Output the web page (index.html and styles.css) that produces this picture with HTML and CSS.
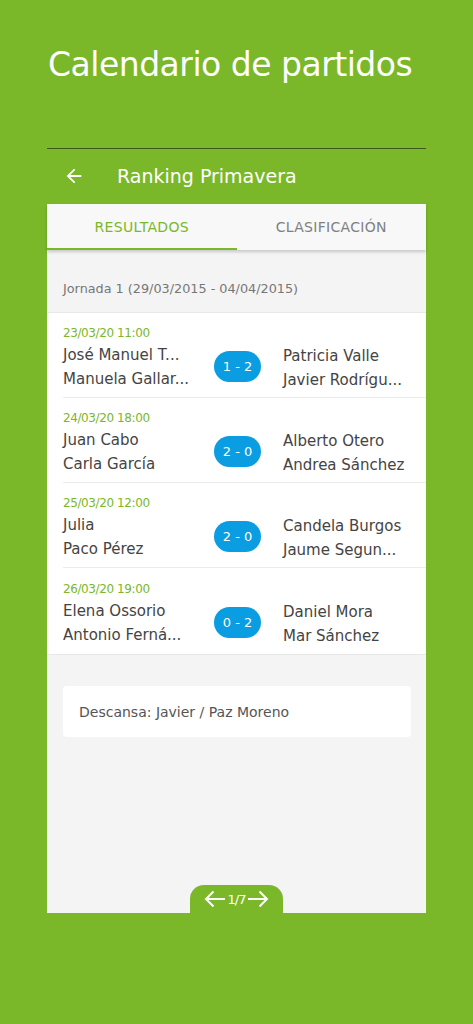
FILE: index.html
```html
<!DOCTYPE html>
<html>
  <head>
    <link rel="stylesheet" href="styles.css">
  </head>
  <body>
    <div class="page">
      <h1 class="page-title">Calendario de partidos</h1>

      <div class="frame">
        <div class="toolbar">
          <svg class="back" width="22" height="22" viewBox="0 0 24 24">
            <path d="M20 11H7.83l5.59-5.59L12 4l-8 8 8 8 1.41-1.41L7.83 13H20v-2z" fill="#fff"/>
          </svg>
          <span class="toolbar-title">Ranking Primavera</span>
        </div>

        <div class="card">
          <div class="tabs">
            <div class="tab active">RESULTADOS</div>
            <div class="tab">CLASIFICACIÓN</div>
          </div>

          <div class="content">
            <div class="round">Jornada 1 (29/03/2015 - 04/04/2015)</div>

            <div class="matches">
              <div class="match">
                <div class="side">
                  <div class="date">23/03/20 11:00</div>
                  <div class="name">José Manuel T...</div>
                  <div class="name">Manuela Gallar...</div>
                </div>
                <div class="score">1 - 2</div>
                <div class="side right">
                  <div class="name">Patricia Valle</div>
                  <div class="name">Javier Rodrígu...</div>
                </div>
              </div>
              <div class="match">
                <div class="side">
                  <div class="date">24/03/20 18:00</div>
                  <div class="name">Juan Cabo</div>
                  <div class="name">Carla García</div>
                </div>
                <div class="score">2 - 0</div>
                <div class="side right">
                  <div class="name">Alberto Otero</div>
                  <div class="name">Andrea Sánchez</div>
                </div>
              </div>
              <div class="match">
                <div class="side">
                  <div class="date">25/03/20 12:00</div>
                  <div class="name">Julia</div>
                  <div class="name">Paco Pérez</div>
                </div>
                <div class="score">2 - 0</div>
                <div class="side right">
                  <div class="name">Candela Burgos</div>
                  <div class="name">Jaume Segun...</div>
                </div>
              </div>
              <div class="match">
                <div class="side">
                  <div class="date">26/03/20 19:00</div>
                  <div class="name">Elena Ossorio</div>
                  <div class="name">Antonio Ferná...</div>
                </div>
                <div class="score">0 - 2</div>
                <div class="side right">
                  <div class="name">Daniel Mora</div>
                  <div class="name">Mar Sánchez</div>
                </div>
              </div>
            </div>

            <div class="rest">Descansa: Javier / Paz Moreno</div>
          </div>

          <div class="pager">
            <svg width="22" height="18" viewBox="0 0 22 18">
              <path d="M21 9H2M9.5 1.5L2 9l7.5 7.5" stroke="#fff" stroke-width="2" fill="none"/>
            </svg>
            <span class="pager-num">1/7</span>
            <svg width="22" height="18" viewBox="0 0 22 18">
              <path d="M1 9h19M12.5 1.5L20 9l-7.5 7.5" stroke="#fff" stroke-width="2" fill="none"/>
            </svg>
          </div>
        </div>
      </div>
    </div>
  </body>
</html>
```

FILE: styles.css
```css
body {
  margin: 0;
  background-color: #7ab829;
  font-family: "DejaVu Sans", sans-serif;
}

.page {
  height: 1024px;
}

.page-title {
  margin: 0;
  padding: 45px 0 0 48px;
  height: 106px;
  box-sizing: border-box;
  color: #fff;
  font-family: "DejaVu Sans", sans-serif;
  font-weight: normal;
  font-size: 33px;
  letter-spacing: -0.5px;
}

.frame {
  margin: 42px 47px 0 47px;
  border-top: 1px solid #3d5a1e;
}

.toolbar {
  height: 55px;
  display: flex;
  align-items: center;
}

.back {
  margin-left: 16px;
  margin-right: 32px;
  margin-top: -2px;
}

.toolbar-title {
  color: #fff;
  font-size: 19px;
  margin-top: -1px;
}

.card {
  height: 709px;
  background-color: #f4f4f4;
  display: flex;
  flex-direction: column;
}

.tabs {
  display: flex;
  height: 46px;
  background-color: #f8f8f8;
  box-shadow: 0 2px 3px rgba(0, 0, 0, 0.18);
  position: relative;
}

.tab {
  flex: 1;
  display: flex;
  align-items: center;
  justify-content: center;
  font-size: 14px;
  color: #808080;
  letter-spacing: 0.3px;
}

.tab.active {
  color: #7ab829;
  border-bottom: 2px solid #7ab829;
  padding-top: 2px;
}

.content {
  flex: 1;
}

.round {
  height: 63px;
  display: flex;
  align-items: center;
  padding-left: 16px;
  padding-top: 14px;
  box-sizing: border-box;
  font-size: 12.8px;
  color: #777;
  border-bottom: 1px solid #e8e8e8;
}

.matches {
  background-color: #fff;
  border-bottom: 1px solid #e8e8e8;
}

.match {
  display: flex;
  align-items: center;
  height: 85px;
  margin-left: 16px;
  border-bottom: 1px solid #ececec;
  box-sizing: border-box;
}

.match:last-child {
  border-bottom: none;
  height: 86px;
}

.side {
  width: 134px;
  padding-top: 7px;
}

.side.right {
  width: 128px;
  padding-top: 26px;
}

.date {
  color: #7ab829;
  font-size: 12px;
  letter-spacing: -0.4px;
  margin-bottom: 3px;
}

.name {
  color: #444;
  font-size: 15px;
  line-height: 24px;
  white-space: nowrap;
}

.score {
  margin: 0 22px 0 17px;
  margin-top: 22px;
  width: 47px;
  height: 31px;
  border-radius: 16px;
  background-color: #0a9de2;
  color: #fff;
  font-size: 13px;
  display: flex;
  align-items: center;
  justify-content: center;
}

.rest {
  margin: 31px 15px 0 16px;
  height: 51px;
  background-color: #fff;
  border-radius: 4px;
  display: flex;
  align-items: center;
  padding-left: 16px;
  font-size: 14px;
  color: #555;
}

.pager {
  align-self: center;
  width: 93px;
  height: 28px;
  border-radius: 14px 14px 0 0;
  background-color: #7ab829;
  display: flex;
  align-items: center;
  justify-content: center;
  gap: 2px;
}

.pager-num {
  color: #fff;
  font-size: 13px;
  letter-spacing: -1px;
}
```
